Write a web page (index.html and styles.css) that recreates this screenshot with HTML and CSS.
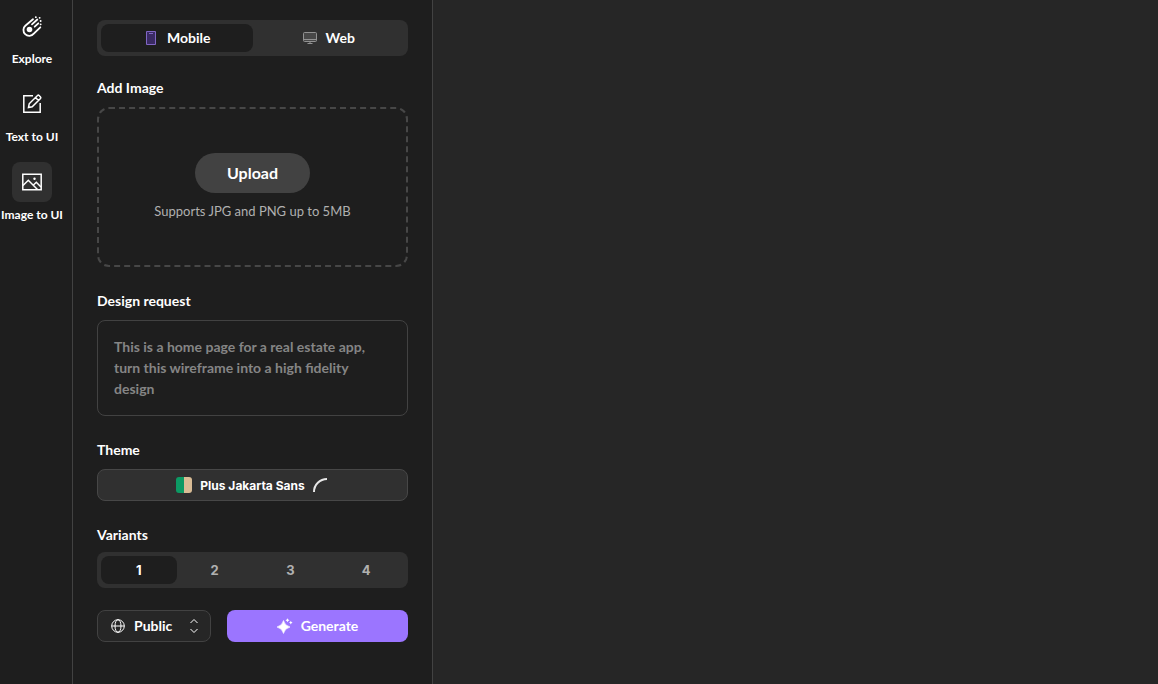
FILE: index.html
```html
<!DOCTYPE html>
<html lang="en">
<head>
    <meta charset="UTF-8">
    <meta name="viewport" content="width=device-width, initial-scale=1.0">
    <title>Image to UI</title>
    <link rel="stylesheet" href="styles.css">
</head>
<body>
    <nav class="sidebar">
        <a href="#explore" class="nav-item">
            <span class="nav-icon">
                <svg width="24" height="24" viewBox="0 0 24 24" fill="none" stroke="currentColor" stroke-width="1.8" stroke-linecap="round">
                    <path d="M13 5.3L5.6 11.5A5.8 5.8 0 1 0 13.8 19.6L20.3 13.3"/>
                    <circle cx="9.5" cy="15.5" r="2.8" fill="currentColor" stroke="none"/>
                    <path d="M12 10.3L17.3 5.5M14.7 12.7L18.3 9.3M19.6 3.8h.1M20.6 7h.1M15.8 3.2h.1M20.6 10.3h.1"/>
                </svg>
            </span>
            Explore
        </a>
        <a href="#text" class="nav-item">
            <span class="nav-icon">
                <svg width="24" height="24" viewBox="0 0 24 24" fill="none" stroke="currentColor" stroke-width="1.5">
                    <path d="M13 3.8H3.8V20.2H20.2V11"/>
                    <path d="M8.5 15.5L9.2 11.8L17.5 3.5Q18.3 2.8 19.1 3.5L20.5 4.9Q21.2 5.7 20.5 6.5L12.2 14.8ZM15.5 5.5L18.5 8.5"/>
                </svg>
            </span>
            Text to UI
        </a>
        <a href="#image" class="nav-item active">
            <span class="nav-icon">
                <svg width="24" height="24" viewBox="0 0 24 24" fill="none" stroke="currentColor" stroke-width="1.5">
                    <path d="M2.8 4.3H21.2V19.7H2.8Z"/>
                    <path d="M3 15.5L8.3 10.2L17.5 19.5M13.2 15.2L16.3 12.3L21 17"/>
                    <circle cx="14.5" cy="8.8" r="1.2" fill="currentColor" stroke="none"/>
                </svg>
            </span>
            Image to UI
        </a>
    </nav>

    <aside class="panel">
        <div class="segmented platform">
            <button type="button" class="segment active">
                <svg width="16" height="16" viewBox="0 0 16 16" fill="#3a2a63" stroke="#8066c4">
                    <path d="M3.5 1.5H12.5V14.5H3.5Z"/>
                    <path d="M6 3.5H10"/>
                </svg>
                Mobile
            </button>
            <button type="button" class="segment">
                <svg width="16" height="16" viewBox="0 0 16 16" fill="none" stroke="#929292">
                    <path d="M2.5 2.5H13.5Q14.5 2.5 14.5 3.5V10.5Q14.5 11.5 13.5 11.5H2.5Q1.5 11.5 1.5 10.5V3.5Q1.5 2.5 2.5 2.5Z" fill="#484848"/>
                    <path d="M1.5 9.5H14.5M8 11.5V13.5M5.5 13.5H10.5"/>
                </svg>
                Web
            </button>
        </div>

        <section class="field image-field">
            <h2>Add Image</h2>
            <div class="dropzone">
                <button type="button" class="upload">Upload</button>
                <p>Supports JPG and PNG up to 5MB</p>
            </div>
        </section>

        <section class="field">
            <label for="request">Design request</label>
            <textarea id="request" placeholder="This is a home page for a real estate app, turn this wireframe into a high fidelity design"></textarea>
        </section>

        <section class="field">
            <h2>Theme</h2>
            <button type="button" class="theme">
                <span class="swatch"></span>
                Plus Jakarta Sans
                <svg width="16" height="16" viewBox="0 0 16 16" fill="none" stroke="#e8e8e8" stroke-width="2">
                    <path d="M1 15A13 13 0 0 1 14 2"/>
                </svg>
            </button>
        </section>

        <section class="field variants-field">
            <h2>Variants</h2>
            <div class="segmented variants">
                <button type="button" class="segment active">1</button>
                <button type="button" class="segment">2</button>
                <button type="button" class="segment">3</button>
                <button type="button" class="segment">4</button>
            </div>
        </section>

        <div class="actions">
            <div class="visibility">
                <svg class="globe" width="16" height="16" viewBox="0 0 16 16" fill="none" stroke="currentColor">
                    <circle cx="8" cy="8" r="6.3"/>
                    <ellipse cx="8" cy="8" rx="3" ry="6.3"/>
                    <path d="M1.7 8H14.3"/>
                </svg>
                <select aria-label="Visibility">
                    <option>Public</option>
                    <option>Private</option>
                </select>
                <svg class="chevrons" width="16" height="16" viewBox="0 0 16 16" fill="none" stroke="currentColor">
                    <path d="M4.5 5L8 1.5L11.5 5M4.5 11L8 14.5L11.5 11"/>
                </svg>
            </div>
            <button type="button" class="generate">
                <svg width="16" height="16" viewBox="0 0 16 16" fill="currentColor">
                    <path d="M6.5 2.5Q7.8 7.7 13 9Q7.8 10.3 6.5 15.5Q5.2 10.3 0 9Q5.2 7.7 6.5 2.5Z" stroke="currentColor" stroke-width=".6" stroke-linejoin="round"/>
                    <path d="M10.5 .3Q10.9 1.9 12.5 2.3Q10.9 2.7 10.5 4.3Q10.1 2.7 8.5 2.3Q10.1 1.9 10.5 .3Z"/>
                    <path d="M13.8 2.8Q14.2 4.2 15.6 4.6Q14.2 5 13.8 6.4Q13.4 5 12 4.6Q13.4 4.2 13.8 2.8Z"/>
                </svg>
                Generate
            </button>
        </div>
    </aside>

    <main class="canvas"></main>
</body>
</html>
```
FILE: styles.css
```css
* {
    box-sizing: border-box;
}
body {
    display: flex;
    min-height: 100vh;
    margin: 0;
    background: #262626;
    color: #fff;
    font-family: Lato, sans-serif;
    font-size: 14px;
    font-weight: 700;
}
h2, p {
    margin: 0;
}
button, select, textarea {
    padding: 0;
    border: 0;
    color: inherit;
    font: inherit;
}
button {
    display: flex;
    align-items: center;
    justify-content: center;
    gap: 8px;
    cursor: pointer;
}
svg {
    flex: none;
}
.sidebar {
    display: flex;
    flex: none;
    flex-direction: column;
    gap: 15px;
    width: 73px;
    padding: 6px 8px 0 0;
    background: #1e1e1e;
    border-right: 1px solid #424242;
}
.nav-item {
    display: flex;
    flex-direction: column;
    align-items: center;
    gap: 3px;
    color: #fff;
    font-size: 12px;
    line-height: 20px;
    white-space: nowrap;
    text-decoration: none;
}
.nav-icon {
    display: flex;
    align-items: center;
    justify-content: center;
    width: 40px;
    height: 40px;
    border-radius: 8px;
}
.nav-item.active .nav-icon {
    background: #303030;
}
.panel {
    flex: none;
    width: 360px;
    padding: 20px 24px;
    background: #1e1e1e;
    border-right: 1px solid #424242;
}
.segmented {
    display: flex;
    height: 36px;
    padding: 4px;
    background: #303030;
    border-radius: 8px;
}
.segment {
    flex: 1;
    background: none;
    border-radius: 8px;
}
.segment.active {
    background: #1e1e1e;
}
.platform .segment, .generate {
    padding-bottom: 1px;
}
.variants .segment {
    color: #b0b0b0;
    font-family: Inter, sans-serif;
    font-size: 13px;
}
.variants .segment.active {
    color: #fff;
}
.field {
    margin-top: 25px;
}
.image-field {
    margin-top: 23px;
}
.field h2, .field label {
    display: block;
    margin-bottom: 10px;
    font-size: 14px;
    font-weight: 700;
    line-height: 18px;
}
.variants-field h2 {
    margin-bottom: 8px;
}
.dropzone {
    display: flex;
    flex-direction: column;
    align-items: center;
    justify-content: center;
    gap: 8px;
    height: 160px;
    border: 2px dashed #474747;
    border-radius: 12px;
}
.dropzone p {
    color: #b0b0b0;
    font-size: 13px;
    font-weight: 400;
    line-height: 20px;
}
.upload {
    height: 40px;
    padding: 0 32px 2px;
    background: #424242;
    border-radius: 20px;
    font-size: 16px;
}
textarea {
    display: block;
    width: 100%;
    height: 96px;
    padding: 15px 16px;
    background: none;
    border: 1px solid #424242;
    border-radius: 8px;
    line-height: 21px;
    resize: none;
}
textarea::placeholder {
    color: #858585;
}
.theme {
    width: 100%;
    height: 32px;
    background: #303030;
    border: 1px solid #474747;
    border-radius: 8px;
    font-family: Inter, sans-serif;
    font-size: 12px;
}
.swatch {
    width: 16px;
    height: 16px;
    background: linear-gradient(90deg, #0c9a64 50%, #d9bc95 50%);
    border-radius: 3px;
}
.actions {
    display: flex;
    gap: 16px;
    margin-top: 22px;
}
.visibility {
    position: relative;
    flex: none;
    width: 114px;
    height: 32px;
}
.visibility select {
    width: 100%;
    height: 100%;
    padding: 0 36px 2px;
    appearance: none;
    background: #262626;
    border: 1px solid #424242;
    border-radius: 8px;
}
.globe, .chevrons {
    position: absolute;
    top: 8px;
    pointer-events: none;
}
.globe {
    left: 13px;
}
.chevrons {
    right: 9px;
}
.generate {
    flex: 1;
    height: 32px;
    background: #9b75ff;
    border-radius: 8px;
}
```
